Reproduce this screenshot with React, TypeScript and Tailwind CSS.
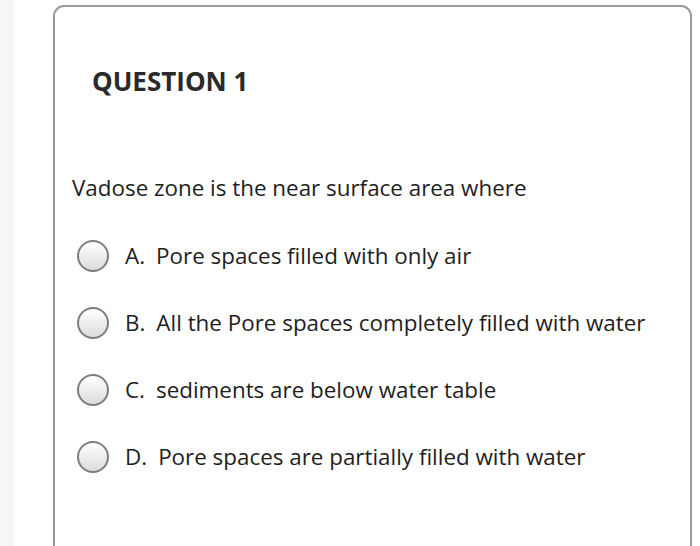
import React from "react";

const options = [
  { l: "A.", t: "Pore spaces filled with only air" },
  { l: "B.", t: "All the Pore spaces completely filled with water" },
  { l: "C.", t: "sediments are below water table" },
  { l: "D.", t: "Pore spaces are partially filled with water" },
];

export default function App() {
  return (
    <div className="w-[700px] h-[546px] overflow-hidden bg-white flex" style={{ fontFamily: '"Open Sans", sans-serif' }}>
      <div className="w-[14px] shrink-0 bg-[#f6f6f6]" />
      <div className="flex-1 pl-[39px] pr-[8px] pt-[5px]">
        <div className="h-[600px] border-2 border-[#9a9a9a] rounded-[11px] bg-white pl-[37px]">
          <h1 className="mt-[56px] text-[26px] leading-[36px] font-bold text-[#2a2a2a]">QUESTION 1</h1>
          <p className="mt-[74px] text-[22.4px] leading-[30px] text-[#1e1e1e] -ml-[20px]">Vadose zone is the near surface area where</p>
          <div className="mt-[37px] flex flex-col gap-[35px] -ml-[15px]">
            {options.map((o) => (
              <div key={o.l} className="flex items-center h-[32px]">
                <div className="w-[32px] h-[32px] rounded-full border-2 border-[#7d7d7d] bg-gradient-to-b from-white to-[#dcdcdc] shrink-0" />
                <span className="ml-[16px] text-[22.4px] leading-[30px] text-[#1e1e1e] whitespace-nowrap">
                  <span className="mr-[11px]">{o.l}</span>{o.t}
                </span>
              </div>
            ))}
          </div>
        </div>
      </div>
    </div>
  );
}
